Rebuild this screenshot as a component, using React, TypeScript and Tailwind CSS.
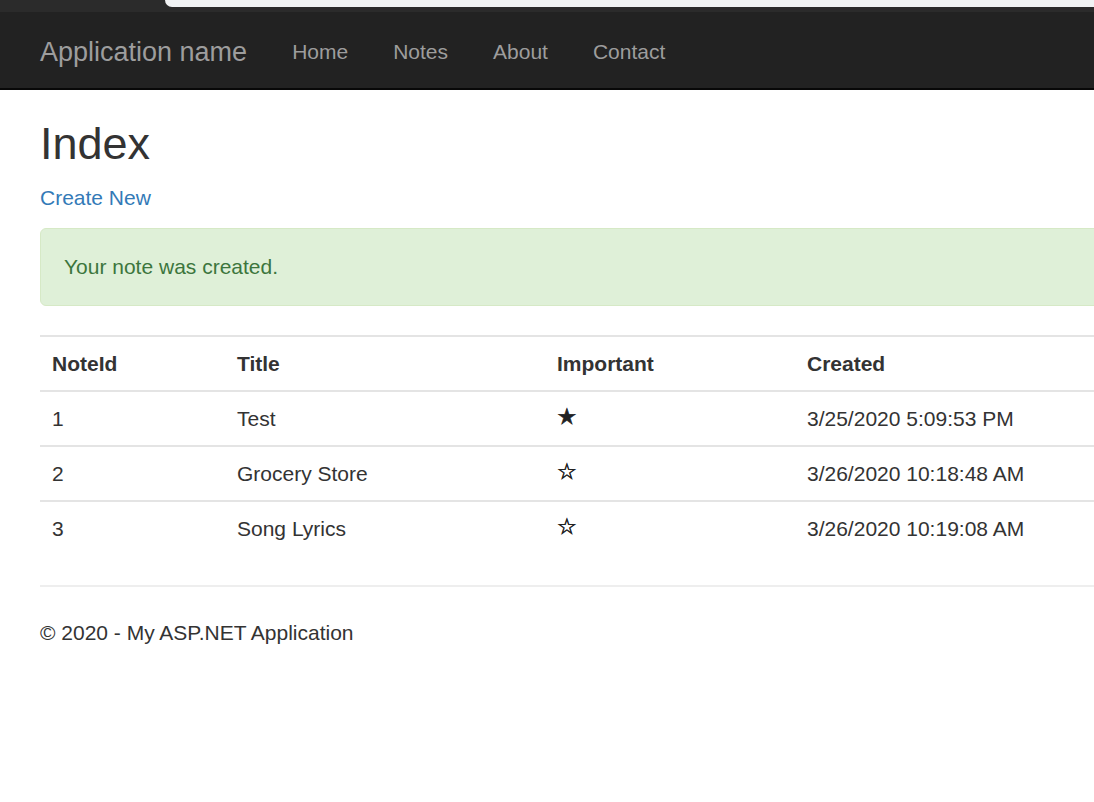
import React from 'react';

interface Note {
  id: number;
  title: string;
  important: boolean;
  created: string;
}

const notes: Note[] = [
  { id: 1, title: 'Test', important: true, created: '3/25/2020 5:09:53 PM' },
  { id: 2, title: 'Grocery Store', important: false, created: '3/26/2020 10:18:48 AM' },
  { id: 3, title: 'Song Lyrics', important: false, created: '3/26/2020 10:19:08 AM' },
];

const navLinks = ['Home', 'Notes', 'About', 'Contact'];

export default function App() {
  return (
    <div
      className="w-[1094px] h-[802px] overflow-hidden bg-white text-[#333333]"
      style={{ fontFamily: '"Liberation Sans", Arial, sans-serif' }}
    >
      {/* Browser chrome remnant */}
      <div className="h-[12px] bg-[#2b2b2b]">
        <div className="ml-[165px] h-[7px] bg-[#f1f3f4] rounded-bl-[10px]" />
      </div>

      {/* Navbar */}
      <div className="h-[78px] bg-[#222222] border-b-2 border-[#080808] flex items-center pl-[40px] pt-[3px]">
        <span className="text-[27px] leading-[30px] text-[#9d9d9d]">Application name</span>
        <div className="flex ml-[22.5px]">
          {navLinks.map(link => (
            <span key={link} className="px-[22.5px] text-[21px] leading-[30px] text-[#9d9d9d]">
              {link}
            </span>
          ))}
        </div>
      </div>

      {/* Body */}
      <div className="pl-[40px] w-[1200px]">
        <h2 className="mt-[29px] mb-[14px] text-[45px] leading-[49.5px] font-normal">Index</h2>
        <p className="mb-[15px] text-[21px] leading-[30px]">
          <a className="text-[#337ab7]">Create New</a>
        </p>

        <div className="mb-[29px] border border-[#d6e9c6] bg-[#dff0d8] rounded-[6px] px-[23px] py-[23px] text-[21px] leading-[30px] text-[#3c763d]">
          Your note was created.
        </div>

        <table className="w-full table-fixed border-collapse text-[21px]">
          <tbody>
            <tr className="border-t-2 border-[#e4e4e4]">
              <th className="w-[185px] px-[12px] py-[12px] leading-[29px] text-left font-bold">NoteId</th>
              <th className="w-[320px] px-[12px] py-[12px] leading-[29px] text-left font-bold">Title</th>
              <th className="w-[250px] px-[12px] py-[12px] leading-[29px] text-left font-bold">Important</th>
              <th className="px-[12px] py-[12px] leading-[29px] text-left font-bold">Created</th>
            </tr>
            {notes.map(note => (
              <tr key={note.id} className="border-t-2 border-[#e4e4e4]">
                <td className="px-[12px] py-[12px] leading-[29px]">{note.id}</td>
                <td className="px-[12px] py-[12px] leading-[29px]">{note.title}</td>
                <td
                  className="px-[12px] py-[12px] leading-[29px] text-[22px] text-[#222222] [-webkit-text-stroke:0.6px_#222222]"
                  style={{ fontFamily: '"DejaVu Sans", sans-serif' }}
                >
                  <span className="relative -top-[2px]">{note.important ? '★' : '☆'}</span>
                </td>
                <td className="px-[12px] py-[12px] leading-[29px]">{note.created}</td>
              </tr>
            ))}
          </tbody>
        </table>

        <hr className="mt-[30px] border-t-2 border-[#eeeeee]" />

        <footer className="mt-[31px]">
          <p className="text-[21px] leading-[30px]">© 2020 - My ASP.NET Application</p>
        </footer>
      </div>
    </div>
  );
}
